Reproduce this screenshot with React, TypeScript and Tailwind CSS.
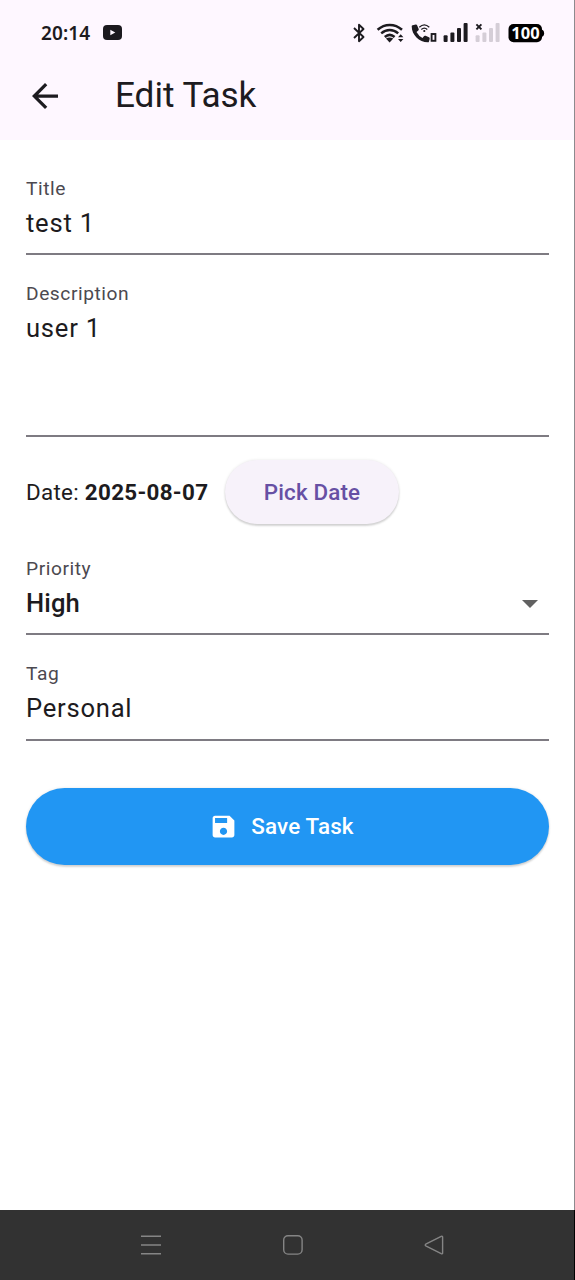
import React from 'react';

function StatusBar() {
  return (
    <div className="flex h-[65px] items-center pl-[41px] pr-[28px] text-[#1d1b20]">
      <span className="font-['Noto_Sans',sans-serif] text-[19px] font-semibold leading-[24px] tracking-[0.1px]">20:14</span>
      <svg className="ml-[13px]" width="19" height="15" viewBox="0 0 19 15">
        <rect width="19" height="15" rx="4" fill="#1b191e" />
        <path d="M7.3 4.7v5.6l5-2.8z" fill="#fef7ff" />
      </svg>
      <svg className="ml-auto" width="194" height="24" viewBox="352 21 194 24">
        <path d="M354 28l9.5 9-4.5 4.2V24.8l4.5 4.2-9.5 9" fill="none" stroke="#1d1b20" strokeWidth="1.9" strokeLinejoin="round" />
        <g fill="none" stroke="#1d1b20" strokeWidth="2.5">
          <path d="M377.6 29.8c7.2-6.4 17.2-6.4 24.4 0" />
          <path d="M381.2 33.4c5.2-4.4 11.8-4.4 17 0" />
          <path d="M384.8 37c3.2-2.8 6.6-2.8 9.8 0" />
        </g>
        <path d="M385.9 38.6q3.7-2.4 7.4 0l-3.7 4z" fill="#1d1b20" />
        <path d="M398 37.300l2.700-3 2.700 3zM398 38.900l2.700 3 2.700-3z" fill="#1d1b20" />
        <path d="M412.700 25.200l3.100-.6q1-.1 1.400.8l1.500 3.500q.3.900-.4 1.500l-1.800 1.500q2.200 4 6 6l1.600-1.800q.6-.7 1.500-.3l3.300 1.500q1 .4.800 1.400l-.7 2.700q-.2.900-1.200.9c-8.700 0-16.100-7.400-16.100-16 0-.6.300-1 1-1.100z" fill="#1d1b20" />
        <g fill="none" stroke="#1d1b20" strokeWidth="1.3">
          <path d="M419.300 27.200q5-4.600 10 0M421.300 29.500q3-2.700 6 0" />
          <rect x="431.600" y="34" width="3.800" height="6.800" strokeWidth="1.900" />
        </g>
        <circle cx="424.300" cy="31" r="1.100" fill="#1d1b20" />
        <g fill="#1d1b20">
          <rect x="443.600" y="35.200" width="4" height="6.800" rx="1" />
          <rect x="450.400" y="32.600" width="4" height="9.400" rx="1" />
          <rect x="457" y="28" width="4" height="14" rx="1" />
          <rect x="463.600" y="23" width="4" height="19" rx="1" />
        </g>
        <g fill="#d5ced7">
          <rect x="475.600" y="35.200" width="4" height="6.800" rx="1" />
          <rect x="482.400" y="32.600" width="4" height="9.400" rx="1" />
          <rect x="489" y="28" width="4" height="14" rx="1" />
          <rect x="495.600" y="23" width="4" height="19" rx="1" />
        </g>
        <path d="M476.400 24.300l5 5M481.400 24.300l-5 5" stroke="#1d1b20" strokeWidth="1.900" />
        <rect x="508.500" y="24" width="33.500" height="18.300" rx="5" fill="#000" />
        <path d="M541.500 29.500q2.600.5 2.600 3.700t-2.600 3.700z" fill="#000" />
        <text x="525.500" y="39.200" textAnchor="middle" fontFamily="Noto Sans, sans-serif" fontSize="16.500" fontWeight="700" fill="#fff">100</text>
      </svg>
    </div>
  );
}

function Header() {
  return (
    <header className="h-[140px] bg-[#fef7ff]">
      <StatusBar />
      <div className="flex h-[60px] items-center pl-[32px]">
        <svg className="mt-px" width="26" height="26" viewBox="4 4 16 16" fill="#1d1b20">
          <path d="M20 11H7.830l5.590-5.590L12 4l-8 8 8 8 1.410-1.410L7.830 13H20z" />
        </svg>
        <h1 className="ml-[57px] text-[35.2px] leading-[44px] tracking-[-0.05px] text-[#1d1b20]">Edit Task</h1>
      </div>
    </header>
  );
}

type FieldProps = { label: string; height: string; children: React.ReactNode };

function Field({ label, height, children }: FieldProps) {
  return (
    <div className={`flex flex-col ${height}`}>
      <div className="pt-px text-[19.2px] leading-[20px] tracking-[0.55px] text-[#4c4950]">{label}</div>
      <div className="mt-[8px] flex grow items-start justify-between text-[25.6px] leading-[32px] text-[#1d1b20]">
        {children}
      </div>
      <div className="h-[2px] bg-[#7e7b82]" />
    </div>
  );
}

export default function App() {
  return (
    <div className="flex h-[1280px] w-[575px] flex-col bg-white font-['Roboto',sans-serif]">
      <div className="grow border-r border-[#8c8a8e]">
        <Header />
        <main className="flex flex-col pl-[26px] pr-[25px] pt-[38px]">
          <Field label="Title" height="h-[77px]">
            <span className="tracking-[0.75px]">test 1</span>
          </Field>
          <div className="h-[28px]" />
          <Field label="Description" height="h-[154px]">
            <span className="tracking-[0.75px]">user 1</span>
          </Field>
          <div className="mt-[23px] flex h-[64px] items-center text-[22.4px] leading-[32px]">
            <p className="w-[199px] pb-px tracking-[0.3px] text-[#1d1b20]">
              Date: <b className="font-bold">2025-08-07</b>
            </p>
            <button className="h-[64px] w-[174px] rounded-full bg-[#f7f2fa] pb-px font-medium tracking-[0.16px] text-[#6750a4] shadow-[0_2px_2px_rgba(0,0,0,0.15),0_0_3px_rgba(0,0,0,0.1)]">
              Pick Date
            </button>
          </div>
          <div className="h-[34px]" />
          <Field label="Priority" height="h-[77px]">
            <span className="font-medium tracking-[0.1px]">High</span>
            <svg className="mr-[11px] mt-[13px]" width="16" height="8" viewBox="0 0 16 8">
              <path d="M0 0h16l-8 8z" fill="#616161" />
            </svg>
          </Field>
          <div className="h-[28px]" />
          <Field label="Tag" height="h-[78px]">
            <span className="tracking-[0.75px]">Personal</span>
          </Field>
          <button className="mt-[47px] flex h-[77px] items-center justify-center rounded-full bg-[#2196f3] pr-[12px] text-[22.4px] font-medium tracking-[0.16px] text-white shadow-[0_2px_2px_rgba(0,0,0,0.15),0_0_3px_rgba(0,0,0,0.1)]">
            <svg className="mr-[13px]" width="29" height="29" viewBox="0 0 24 24" fill="currentColor">
              <path d="M17 3H5c-1.110 0-2 .9-2 2v14c0 1.100.89 2 2 2h14c1.100 0 2-.9 2-2V7zm-5 16c-1.660 0-3-1.340-3-3s1.340-3 3-3 3 1.340 3 3-1.340 3-3 3m3-10H5V5h10z" />
            </svg>
            <span className="pt-px">Save Task</span>
          </button>
        </main>
      </div>
      <nav className="flex h-[70px] items-center border-r border-black bg-[#323232] pl-[140px] text-[#858585]">
        <svg width="22" height="22" viewBox="0 0 22 22" stroke="currentColor" strokeWidth="1.500">
          <path d="M1 2.200h20M1 11h20M1 19.700h20" />
        </svg>
        <svg className="ml-[120px]" width="22" height="22" viewBox="0 0 22 22" fill="none" stroke="currentColor" strokeWidth="1.400">
          <rect x="1.700" y="1.700" width="18.400" height="18.400" rx="4.300" />
        </svg>
        <svg className="ml-[119px]" width="22" height="22" viewBox="0 0 22 22" fill="none" stroke="currentColor" strokeWidth="1.400" strokeLinejoin="round">
          <path d="M2.700 10.200q-1 .8 0 1.600l15.500 7.900q1.400.5 1.400-.8V3.100q0-1.300-1.400-.8z" />
        </svg>
      </nav>
    </div>
  );
}
